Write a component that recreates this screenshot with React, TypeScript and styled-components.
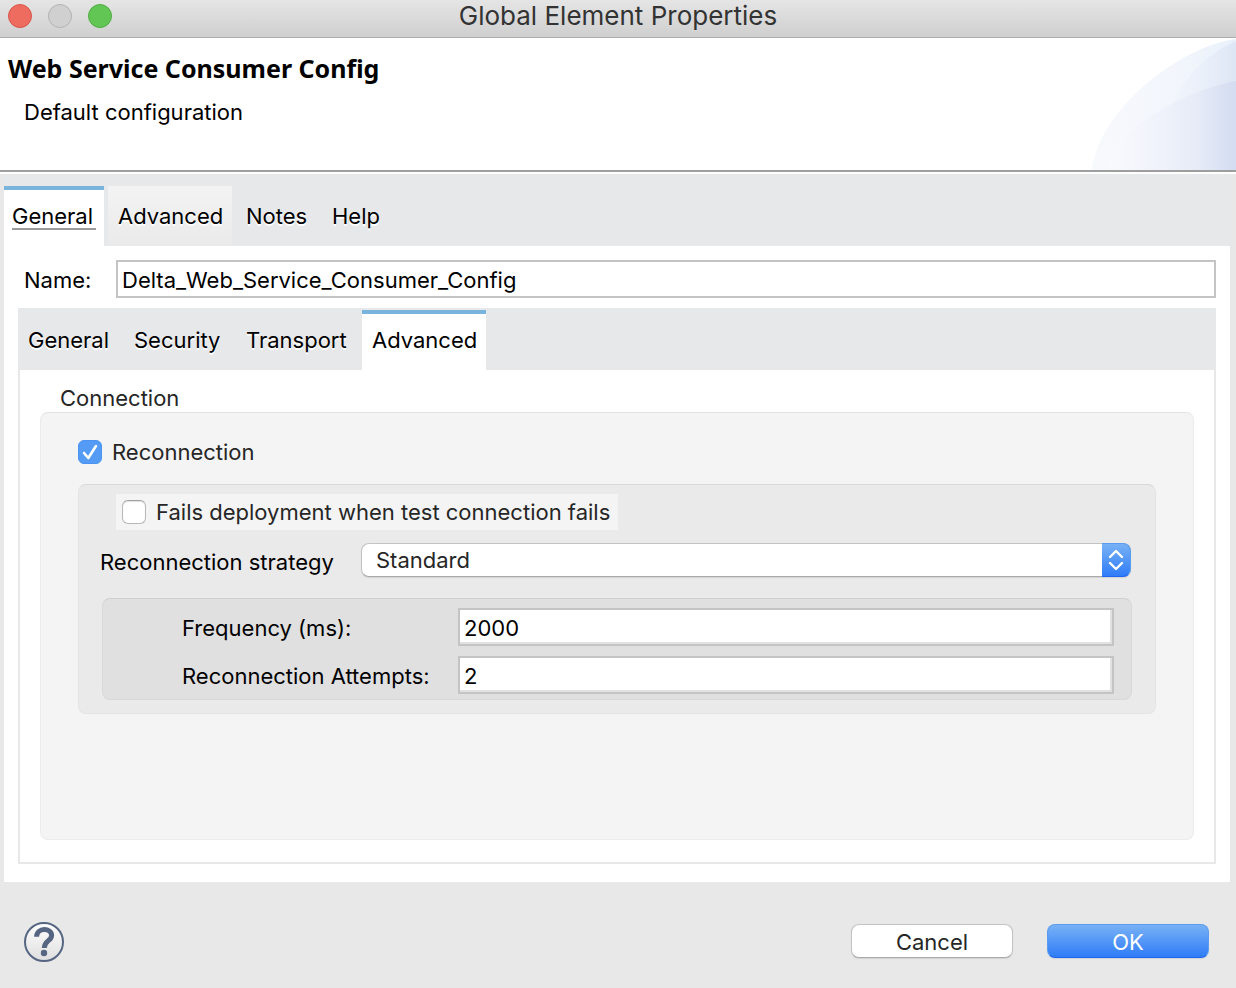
import React, { useState } from "react";
import styled, { createGlobalStyle, css } from "styled-components";

const GlobalStyle = createGlobalStyle`
  *, *::before, *::after { box-sizing: border-box; }
  body {
    margin: 0;
    background: #e8e8e8;
    color: #000;
    font: 22px/28px Inter, "Liberation Sans", sans-serif;
  }
  button, input, select { font: inherit; color: inherit; margin: 0; }
`;

const Window = styled.div`
  display: flex;
  flex-direction: column;
  min-height: 100vh;
`;

const TitleBar = styled.header`
  display: grid;
  grid-template-columns: 1fr auto 1fr;
  height: 38px;
  padding: 0 8px 5px;
  align-items: center;
  background: linear-gradient(#e5e5e5, #cfcfcf);
  border-bottom: 1px solid #acacac;
`;

const Lights = styled.div`
  display: flex;
  gap: 16px;
`;

const Light = styled.button<{ $fill: string; $edge: string }>`
  width: 24px;
  height: 24px;
  padding: 0;
  border-radius: 50%;
  border: 1px solid ${(p) => p.$edge};
  background: ${(p) => p.$fill};
`;

const WindowTitle = styled.span`
  font-size: 26px;
  line-height: 32px;
  color: #333;
`;

const Banner = styled.section`
  display: flex;
  justify-content: space-between;
  height: 136px;
  background: #fff;
  border-bottom: 2px solid #fff;
  box-shadow: inset 0 -2px 0 #9e9e9e;
`;

const BannerText = styled.div`
  padding: 14px 8px;
`;

const Heading = styled.h1`
  margin: 0;
  font: bold 25px/32px "Noto Sans", "Open Sans", sans-serif;
`;

const Subtitle = styled.p`
  margin: 14px 0 0 16px;
`;

const Main = styled.main`
  display: flex;
  flex-direction: column;
  flex: 1;
  margin: 0 6px 0 4px;
`;

const TabBar = styled.div`
  display: flex;
  gap: 4px;
  padding-top: 12px;
  background: #e7e8e9;
`;

const Tab = styled.button<{ $width: number; $selected?: boolean; $hover?: boolean }>`
  width: ${(p) => p.$width}px;
  height: 60px;
  padding: 0 10px 4px;
  border: 0;
  border-top: 4px solid transparent;
  background: none;
  text-align: left;
  text-shadow: 0 2px 0 #fff;
  white-space: nowrap;
  ${(p) => p.$selected && css`
    background: #fff;
    border-top-color: #78b4dc;
  `}
  ${(p) => p.$hover && css`
    background: linear-gradient(#f3f3f3, #eaeaea) border-box;
  `}
`;

const FocusMark = styled.span`
  display: block;
  margin: 0 -2px;
  box-shadow: 0 2px 0 #9b9b9b;
  line-height: 24px;
`;

const Panel = styled.section`
  display: flex;
  flex-direction: column;
  flex: 1;
  padding: 14px 14px 18px;
  background: #fff;
`;

const FieldLabel = styled.label`
  padding-top: 2px;
`;

const NameRow = styled.div`
  display: grid;
  grid-template-columns: 92px 1fr;
  align-items: center;
  margin: 0 0 10px 6px;
`;

const TextField = styled.input<{ $inset?: boolean }>`
  width: 100%;
  height: 38px;
  padding: 2px 4px 0;
  border: 2px solid #c4c4c4;
  border-radius: 0;
  background: #fff;
  outline: none;
  ${(p) => p.$inset && css`box-shadow: inset -2px -2px 0 #e1e1e1;`}
`;

const InnerTabBar = styled.div`
  display: flex;
  padding-top: 2px;
  background: #e7e8e9;
`;

const InnerPanel = styled.div`
  display: flex;
  flex-direction: column;
  flex: 1;
  padding: 14px 20px 22px;
  border: 2px solid #e8e8e8;
  border-top: 0;
`;

const GroupTitle = styled.h2`
  margin: 0 20px;
  font-size: 22px;
  font-weight: 400;
  line-height: 28px;
  color: #262626;
`;

const Group = styled.section`
  flex: 1;
  padding: 27px 37px 28px;
  border: 1px solid #ebebeb;
  border-top-color: #e2e2e2;
  border-radius: 8px;
  background: #f4f4f4;
`;

const SubGroup = styled.section`
  margin-top: 20px;
  padding: 9px 24px 13px 23px;
  border: 1px solid #e4e4e4;
  border-top-color: #d9d9d9;
  border-radius: 8px;
  background: #eaeaea;
`;

const CheckLabel = styled.label<{ $boxed?: boolean }>`
  display: flex;
  align-items: center;
  gap: 10px;
  width: fit-content;
  height: 24px;
  color: #262626;
  ${(p) => p.$boxed && css`
    height: 36px;
    margin-left: 14px;
    padding: 0 8px 0 6px;
    background: #f4f4f4;
  `}
`;

const TickCell = styled.span`
  display: grid;
  & > * { grid-area: 1 / 1; }
  & > svg { pointer-events: none; }
`;

const Tick = styled.input`
  appearance: none;
  width: 24px;
  height: 24px;
  border: 1px solid #b8b8b8;
  border-top-color: #a0a0a0;
  border-radius: 6px;
  background: #fff;
  box-shadow: inset 0 1px 1px #e2e2e2;
  &:checked {
    border-color: #4a93f0;
    background: #539bf5;
    box-shadow: none;
  }
`;

const StrategyRow = styled.div`
  display: grid;
  grid-template-columns: 261px 1fr;
  align-items: center;
  margin: 13px 0 21px -2px;
  & > label { padding-top: 4px; }
`;

const SelectCell = styled.div`
  display: grid;
  & > * { grid-area: 1 / 1; }
`;

const Select = styled.select`
  appearance: none;
  height: 34px;
  padding: 0 40px 0 14px;
  border: 1px solid #c3c3c3;
  border-bottom-color: #aaa;
  border-radius: 8px;
  background: #fff;
  color: #262626;
  box-shadow: 0 1px 1px #d2d2d2;
`;

const SelectArrows = styled.span`
  display: grid;
  place-items: center;
  justify-self: end;
  width: 29px;
  height: 34px;
  border: 1px solid #5b9cee;
  border-left: 0;
  border-bottom-color: #1f66f5;
  border-radius: 0 8px 8px 0;
  background: linear-gradient(#78b1f5, #2f7cf8);
  pointer-events: none;
`;

const Settings = styled.div`
  display: grid;
  grid-template-columns: 276px 1fr;
  row-gap: 10px;
  align-items: center;
  margin-right: -1px;
  padding: 9px 17px 5px 79px;
  border: 1px solid #d9d9d9;
  border-top-color: #cfcfcf;
  border-radius: 8px;
  background: #e0e0e0;
`;

const Footer = styled.footer`
  display: flex;
  align-items: center;
  gap: 34px;
  height: 106px;
  padding: 14px 27px 0 24px;
`;

const HelpButton = styled.button`
  width: 40px;
  height: 40px;
  margin-right: auto;
  padding: 0;
  border: 0;
  background: none;
  & > svg { display: block; }
`;

const PushButton = styled.button<{ $primary?: boolean }>`
  width: 162px;
  height: 34px;
  margin-bottom: 2px;
  padding: 2px 0 0;
  border: 1px solid #c3c3c3;
  border-bottom-color: #aaa;
  border-radius: 8px;
  background: #fff;
  color: #262626;
  box-shadow: 0 1px 1px #d2d2d2;
  ${(p) => p.$primary && css`
    border-color: #5b9cee;
    border-bottom-color: #1f66f5;
    background: linear-gradient(#78b1f5, #2f7cf8);
    color: #fff;
  `}
`;

function Swoosh() {
  return (
    <svg width="144" height="132" viewBox="0 0 144 132" aria-hidden="true">
      <defs>
        <linearGradient id="outer" gradientUnits="userSpaceOnUse" x1="0" y1="0" x2="144" y2="0">
          <stop offset="0" stopColor="#f8f9fd" />
          <stop offset="0.6" stopColor="#f2f6fc" />
          <stop offset="1" stopColor="#eaf1fb" />
        </linearGradient>
        <linearGradient id="upper" gradientUnits="userSpaceOnUse" x1="80" y1="0" x2="144" y2="0">
          <stop offset="0" stopColor="#f1f5fc" />
          <stop offset="0.6" stopColor="#e8eef9" />
          <stop offset="1" stopColor="#dde6f5" />
        </linearGradient>
        <linearGradient id="lower" gradientUnits="userSpaceOnUse" x1="15" y1="0" x2="144" y2="0">
          <stop offset="0" stopColor="#f8fafd" />
          <stop offset="0.4" stopColor="#f0f3fb" />
          <stop offset="0.7" stopColor="#e6ebf7" />
          <stop offset="1" stopColor="#d3dcf1" />
        </linearGradient>
      </defs>
      <path d="M0 132C6 72 88 8 144 1V132Z" fill="url(#outer)" />
      <path d="M80 66C95 36 115 16 144 3V66Z" fill="url(#upper)" />
      <path d="M15 132C15 104 75 56 144 43V132Z" fill="url(#lower)" />
    </svg>
  );
}

export default function App() {
  const [name, setName] = useState("Delta_Web_Service_Consumer_Config");
  const [reconnect, setReconnect] = useState(true);
  const [fails, setFails] = useState(false);
  const [frequency, setFrequency] = useState("2000");
  const [attempts, setAttempts] = useState("2");

  return (
    <Window>
      <GlobalStyle />
      <TitleBar>
        <Lights>
          <Light aria-label="Close" $fill="#ed6b5f" $edge="#d9554a" />
          <Light aria-label="Minimize" $fill="#d0d0d0" $edge="#b2b2b2" />
          <Light aria-label="Zoom" $fill="#62c655" $edge="#50ad41" />
        </Lights>
        <WindowTitle>Global Element Properties</WindowTitle>
      </TitleBar>

      <Banner>
        <BannerText>
          <Heading>Web Service Consumer Config</Heading>
          <Subtitle>Default configuration</Subtitle>
        </BannerText>
        <Swoosh />
      </Banner>

      <Main>
        <TabBar role="tablist">
          <Tab role="tab" aria-selected="true" $width={100} $selected>
            <FocusMark>General</FocusMark>
          </Tab>
          <Tab role="tab" aria-selected="false" $width={124} $hover>Advanced</Tab>
          <Tab role="tab" aria-selected="false" $width={82}>Notes</Tab>
          <Tab role="tab" aria-selected="false" $width={70}>Help</Tab>
        </TabBar>
        <Panel role="tabpanel">
          <NameRow>
            <FieldLabel htmlFor="name">Name:</FieldLabel>
            <TextField id="name" value={name} onChange={(e) => setName(e.target.value)} />
          </NameRow>
          <InnerTabBar role="tablist">
            <Tab role="tab" aria-selected="false" $width={106}>General</Tab>
            <Tab role="tab" aria-selected="false" $width={112}>Security</Tab>
            <Tab role="tab" aria-selected="false" $width={126}>Transport</Tab>
            <Tab role="tab" aria-selected="true" $width={124} $selected>Advanced</Tab>
          </InnerTabBar>
          <InnerPanel role="tabpanel">
            <GroupTitle>Connection</GroupTitle>
            <Group>
              <CheckLabel>
                <TickCell>
                  <Tick type="checkbox" checked={reconnect} onChange={(e) => setReconnect(e.target.checked)} />
                  {reconnect && (
                    <svg width="24" height="24" viewBox="0 0 24 24" aria-hidden="true">
                      <path d="M6 13L10.300 18L18 6" fill="none" stroke="#fff" strokeWidth="2.600" strokeLinecap="round" strokeLinejoin="round" />
                    </svg>
                  )}
                </TickCell>
                Reconnection
              </CheckLabel>
              <SubGroup>
                <CheckLabel $boxed>
                  <TickCell>
                    <Tick type="checkbox" checked={fails} onChange={(e) => setFails(e.target.checked)} />
                  </TickCell>
                  Fails deployment when test connection fails
                </CheckLabel>
                <StrategyRow>
                  <label htmlFor="strategy">Reconnection strategy</label>
                  <SelectCell>
                    <Select id="strategy" defaultValue="Standard">
                      <option>Standard</option>
                    </Select>
                    <SelectArrows>
                      <svg width="16" height="24" viewBox="0 0 16 24" aria-hidden="true">
                        <path d="M2 9L8 3L14 9M2 15L8 21L14 15" fill="none" stroke="#fff" strokeWidth="2.400" strokeLinecap="round" strokeLinejoin="round" />
                      </svg>
                    </SelectArrows>
                  </SelectCell>
                </StrategyRow>
                <Settings>
                  <FieldLabel htmlFor="frequency">Frequency (ms):</FieldLabel>
                  <TextField id="frequency" $inset value={frequency} onChange={(e) => setFrequency(e.target.value)} />
                  <FieldLabel htmlFor="attempts">Reconnection Attempts:</FieldLabel>
                  <TextField id="attempts" $inset value={attempts} onChange={(e) => setAttempts(e.target.value)} />
                </Settings>
              </SubGroup>
            </Group>
          </InnerPanel>
        </Panel>
      </Main>

      <Footer>
        <HelpButton aria-label="Help">
          <svg width="40" height="40" viewBox="0 0 40 40" aria-hidden="true">
            <defs>
              <linearGradient id="help" x1="0" y1="0" x2="0" y2="1">
                <stop offset="0" stopColor="#fff" />
                <stop offset="1" stopColor="#dedede" />
              </linearGradient>
            </defs>
            <circle cx="20" cy="20" r="19" fill="url(#help)" stroke="#566582" strokeWidth="2" />
            <path d="M12.600 14.800C12.800 5.300 27.600 5.500 27.600 13.500C27.600 19 20.300 18.500 20.300 26" fill="none" stroke="#566582" strokeWidth="5" />
            <circle cx="20" cy="31" r="3.200" fill="#566582" />
          </svg>
        </HelpButton>
        <PushButton>Cancel</PushButton>
        <PushButton $primary>OK</PushButton>
      </Footer>
    </Window>
  );
}
